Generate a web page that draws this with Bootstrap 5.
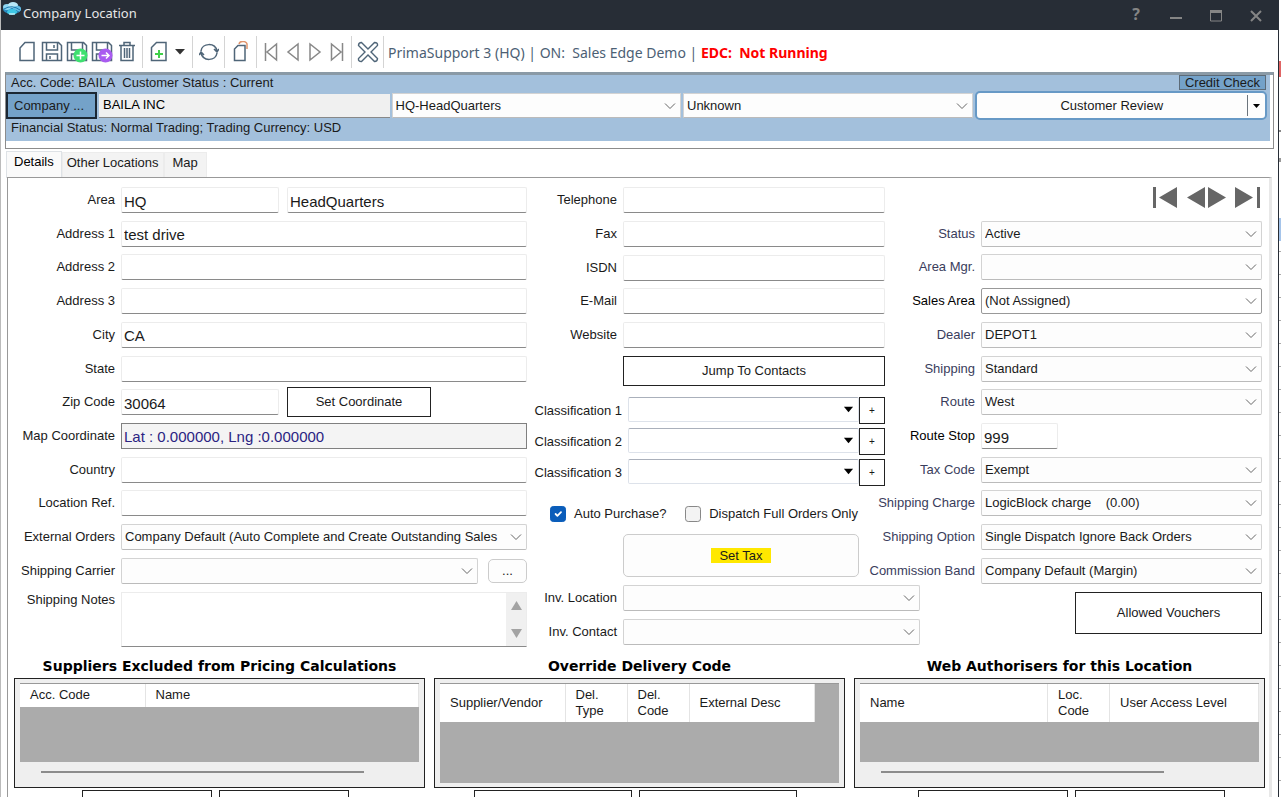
<!DOCTYPE html>
<html lang="en">
<head>
<meta charset="utf-8">
<meta name="viewport" content="width=device-width, initial-scale=1">
<title>Company Location</title>
<link href="https://cdn.jsdelivr.net/npm/bootstrap@5.3.0/dist/css/bootstrap.min.css" rel="stylesheet">
<style>
:root{--field-h:26px;--chev:url("data:image/svg+xml,%3Csvg xmlns='http://www.w3.org/2000/svg' viewBox='0 0 12 12'%3E%3Cpath d='M1 3.5l5 5 5-5' fill='none' stroke='%23666'/%3E%3C/svg%3E")}
body{font:13px/16px "Liberation Sans",Arial,sans-serif;color:#1a1a1a;background:#fff}
button{font:inherit;color:inherit}
.titlebar,.tools,.frame,.tabs{flex:none}
.titlebar{background:#272d36;height:30px;color:#e6e6e6;font:13px/18px "Noto Sans",sans-serif;padding-right:2px}
.titlebar button{width:40px;height:26px;background:none;border:0;color:#858585;padding:0 0 2px}
.win{border-left:1px solid #bbb;border-right:1px solid #272d36;min-width:0}
.strip{width:2px;background:linear-gradient(#fff 61px,#e06464 61px,#e06464 77px,#fff 77px,#fff 130px,#888 130px,#888 132px,#fff 132px,#fff 158px,#999 158px,#999 162px,#fff 162px,#fff 218px,#a5c4ea 218px,#a5c4ea 241px,transparent 241px),repeating-linear-gradient(#fff 0 21px,#aaa 21px 22px,#fff 22px 23px)}
.tools{height:42px;padding-left:13px;padding-top:2px}
.tools button{width:25px;height:28px;padding:0;border:0;background:none;display:flex;align-items:center;justify-content:center}
.tools .step{width:22px}
.tools .drop{width:18px}
.tools .sep{width:1px;height:32px;margin:0 3px;background:#d4d4d4}
.tools svg{fill:none;stroke:#4f6578;stroke-width:1.5}
.status{font:14px/20px "Noto Sans",sans-serif;color:#4c6074;padding:2px 0 0 1px}
.status strong{color:#f00}
.frame{margin:0 4px;border:1px solid #8c8c8c;border-top:3px solid #8a9aa6;height:77px;padding-right:3px}
.band{background:#a3c0dc;height:66px}
.band .line{height:16px;padding-left:5px;line-height:15px}
.band .credit{background:#74a2c9;border:1px solid #5c6b78;width:87px;height:15px;padding:0;line-height:13px;margin-right:4px}
.bandrow{display:grid;grid-template-columns:91px 291fr 290fr 290fr 293fr;column-gap:2px;padding-right:3px;align-items:center}
.company{height:27px;border:2px solid #1b2733;background:#74a2c9;padding:0 6px;text-align:left}
.acct{height:24px;border:0;border-bottom:1px solid #888;background:#f0f0f0;padding:0 4px 1px;min-width:0}
.review{border:2px solid #6799c6;border-radius:5px;background:#fdfdfd;height:29px}
.fld,.sel{height:var(--field-h);min-width:0;border-radius:2px;width:100%}
.fld{border:1px solid #ececec;border-bottom-color:#8a8a8a;background:#fff;font-size:15px;line-height:18px;padding:2px 2px 0;color:#1a1a1a}
.sel{appearance:none;border:1px solid #d3d3d3;border-bottom-color:#bbb;background:#fdfdfd var(--chev) right 4px center/12px 12px no-repeat;padding:0 20px 0 3px;color:#1a1a1a;font-size:13px;text-overflow:ellipsis}
.sel.focus-box{border-color:#999;background-color:#fff}
.band .sel{height:25px;border-radius:0}
.latlng{border:1px solid #808080;border-radius:0;background:#f4f4f4;color:#2b2382;padding-top:0}
.stopno{width:77px}
.pair{display:grid;grid-template-columns:158fr 240fr;column-gap:8px;flex:1;align-items:center}
.coord{width:60%;height:30px;margin:-2px 0}
.tabs{padding-left:5px;height:27px;margin-top:1px;align-items:flex-end}
.tabs .nav-link{border:1px solid #ececec;border-bottom:0;border-radius:0;background:#f3f3f3;color:#1a1a1a;padding:2px 4px 7px;height:26px}
.tabs .nav-link.active{background:#fafafa;padding:2px 7px 8px;height:27px}
.sheet{border:1px solid #999;border-right:3px solid #e8e8e8;border-bottom:0;margin:0 6px;padding-top:9px}
.form3{display:grid;grid-template-columns:519fr 358fr 377fr;padding-right:7px}
.rows{height:397px;display:flex;flex-direction:column;justify-content:space-between}
.rows.upper{height:161px}
.frow{display:flex;align-items:center;gap:6px;min-height:26px}
.frow>label:first-child,.frow>.lab{flex:none;width:90px;display:flex;justify-content:flex-end;white-space:nowrap}
.colL .frow>label:first-child{width:107px}
.colR label{color:#3a3d5c}
.wide{margin-right:-35px}
.clslist{gap:4px;margin:11px 0 20px}
.frow.cls{min-height:27px;align-items:flex-start}
.frow.cls>label:first-child{width:95px;padding-top:6px}
.cls .sel{height:25px;border-color:#aab0bb #dde2ea #dde2ea;background:#fff url("data:image/svg+xml,%3Csvg xmlns='http://www.w3.org/2000/svg' viewBox='0 0 12 12'%3E%3Cpath d='M1 3h10L6 9z'/%3E%3C/svg%3E") right 4px center/11px 11px no-repeat}
.boxbtn{border:1px solid #222;background:#fff;padding:0}
.plus{width:26px;height:27px;flex:none;font-size:10px}
.jump{height:30px}
.vouch{width:187px;height:42px}
.softbtn{border:1px solid #ccc;border-radius:5px;background:#fdfdfd;padding:0}
.dots{width:39px;height:24px}
.settax{height:43px;margin-right:26px}
.hilite{background:#ffe800}
.notes{resize:none;flex:1;border:0;padding:3px;outline:0;min-width:0}
.notebox{display:flex;flex:1;height:55px;border:1px solid #ececec;border-bottom-color:#8a8a8a;overflow:hidden}
.vbar{width:20px;background:#f0f0f0}
.tick{width:16px;height:16px;margin:0;flex:none;border-color:#888;background-color:#f3f3f3}
.tick:checked{background-color:#0a5dba;border-color:#0a5dba;background-size:12px}
.checks{padding:0 27px 0 23px}
.grids{display:grid;grid-template-columns:repeat(3,1fr);gap:9px;padding:11px 4px 0 6px}
.grids h2{font:bold 14px/16px "DejaVu Sans",Verdana,sans-serif;text-align:center;margin:0 0 4px;color:#000}
.gbox{border:1px solid #222;background:#efefef;height:110px;padding:4px 5px 0}
.gview{background:#ababab;height:79px;border-top:1px solid #999}
.gview.tall{height:100px}
.gview table{border-collapse:collapse;background:#fff;table-layout:fixed;width:100%}
.gview table.part{width:94%}
.gview th{font-weight:400;padding:0 10px;border-right:1px solid #e4e4e4;border-bottom:1px solid #ababab;height:38px;vertical-align:middle;text-align:left}
.gview .low th{height:23px}
.c62{width:62px}.c125{width:125px}.c149{width:149px}
.thumb{height:2px;width:81%;background:#8c8c8c;margin:9px auto 0 21px}
.thumb.short{width:71%}
.cuts{display:flex;justify-content:center;gap:7px;margin-top:2px;padding-right:8px}
.cuts.after{padding:0 0 0 24px}
.cut{height:26px;width:130px}
.w158{width:158px}.w150{width:150px}
</style>
</head>
<body class="vh-100 overflow-hidden d-flex">
<div class="win flex-grow-1 d-flex flex-column">
<header class="titlebar d-flex align-items-center">
<svg class="flex-shrink-0 align-self-start" width="22" height="20" viewBox="0 0 22 20" aria-hidden="true"><ellipse cx="11" cy="9" rx="9" ry="5" fill="#2d8fc4"/><ellipse cx="6" cy="7" rx="4" ry="3" fill="#8fd6f2"/><ellipse cx="12" cy="5" rx="5" ry="3" fill="#b7e8f8"/><ellipse cx="16" cy="9" rx="4" ry="3" fill="#67bfe6"/><path d="M3 9q8-5 16 1M5 12q7-4 13 0" stroke="#1c78ac" fill="none"/><ellipse cx="11" cy="12" rx="5" ry="3" fill="#3ec6e4"/><path d="M8 14h6" stroke="#fff"/></svg>
<span class="me-auto mb-1">Company Location</span>
<button type="button" aria-label="Help" class="fs-6 fw-bold">?</button>
<button type="button" aria-label="Minimize"><svg width="14" height="14"><path d="M1 9h12" stroke="#858585" stroke-width="2"/></svg></button>
<button type="button" aria-label="Maximize"><svg width="14" height="14"><path d="M1.500 1v11h11V1" fill="none" stroke="#858585"/><path d="M1 2.500h12" stroke="#858585" stroke-width="3"/></svg></button>
<button type="button" aria-label="Close"><svg width="14" height="14"><path d="M2 2l10 10M12 2L2 12" stroke="#858585" stroke-width="2"/></svg></button>
</header>

<div class="tools d-flex align-items-center" role="toolbar">
<button type="button" aria-label="New"><svg width="20" height="22" viewBox="0 0 20 22"><path d="M8 1.500h9v18H3V7z"/></svg></button>
<button type="button" aria-label="Save"><svg width="22" height="22" viewBox="0 0 22 22"><path d="M1.500 1.500h16l3 3v15h-19zM5.500 2v7h11V2M5.500 19.500V13h11v6.500M13 4v3M9 15v3"/></svg></button>
<button type="button" aria-label="Save and add"><svg width="22" height="22" viewBox="0 0 22 22"><path d="M1.500 1.500h16l3 3v15h-19zM5.500 2v7h11V2M5.500 19.500V13h4"/><circle cx="14.500" cy="14.500" r="7" fill="#3fe070" stroke="none"/><path d="M10.500 14.500h8M14.500 10.500v8" stroke="#fff"/></svg></button>
<button type="button" aria-label="Save and next"><svg width="22" height="22" viewBox="0 0 22 22"><path d="M1.500 1.500h16l3 3v15h-19zM5.500 2v7h11V2M5.500 19.500V13h4"/><circle cx="14.500" cy="14.500" r="7" fill="#a95bf0" stroke="none"/><path d="M10.500 14.500h7M15 11.500l3 3-3 3" stroke="#fff"/></svg></button>
<button type="button" aria-label="Delete"><svg width="20" height="22" viewBox="0 0 20 22"><path d="M2 4.500h16M7 4V1.500h6V4M4 5v14.500h12V5M7.500 7v10M10 7v10M12.500 7v10"/></svg></button>
<span class="sep"></span>
<button type="button" aria-label="Add document"><svg width="20" height="22" viewBox="0 0 20 22"><path d="M7.500 1.500H17v18H2.500V6.500z"/><path d="M10 9v8M6 13h8" stroke="#3fd04a" stroke-width="2"/></svg></button>
<button type="button" class="drop" aria-label="More"><svg width="10" height="6" viewBox="0 0 10 6"><path d="M0 0h10L5 5.500z" fill="#333" stroke="none"/></svg></button>
<span class="sep"></span>
<button type="button" aria-label="Refresh"><svg width="20" height="20" viewBox="0 0 20 20"><path d="M2 9C3 1 16 0 18 9M18 11c-1 8-14 9-16 0M15 7l3 3 2-3M5 13l-3-3-2 3"/></svg></button>
<span class="sep"></span>
<button type="button" aria-label="Paste"><svg width="18" height="22" viewBox="0 0 18 22"><path d="M6 4.500h7v15H2.500V8z"/><path d="M7 3a4 3 0 0 1 8 1v4" stroke="#e0946c"/></svg></button>
<span class="sep"></span>
<button type="button" class="step" aria-label="First"><svg width="14" height="20" viewBox="0 0 14 20"><path stroke="#888" d="M1.500 1v18M12.500 2v16L3 10z"/></svg></button>
<button type="button" class="step" aria-label="Previous"><svg width="14" height="20" viewBox="0 0 14 20"><path stroke="#888" d="M12 2v16L2 10z"/></svg></button>
<button type="button" class="step" aria-label="Next"><svg width="14" height="20" viewBox="0 0 14 20"><path stroke="#888" d="M2 2v16l10-8z"/></svg></button>
<button type="button" class="step" aria-label="Last"><svg width="14" height="20" viewBox="0 0 14 20"><path stroke="#888" d="M12.500 1v18M1.500 2v16l9.500-8z"/></svg></button>
<span class="sep"></span>
<button type="button" aria-label="Cancel"><svg width="22" height="22" viewBox="0 0 22 22"><path stroke-width="1.400" d="M4.500 1.500L11 8l6.500-6.500q3.500 0 3 3L14 11l6.500 6.500q0 3-3 3L11 14l-6.500 6.500q-3.500 0-3-3L8 11 1.500 4.500q0-3 3-3z"/></svg></button>
<span class="sep"></span>
<span class="status">PrimaSupport 3 (HQ) | ON: &nbsp;Sales Edge Demo | <strong>EDC: &nbsp;Not Running</strong></span>
</div>

<section class="frame">
<div class="band">
<div class="line d-flex justify-content-between"><span>Acc. Code: BAILA&nbsp; Customer Status : Current</span><button type="button" class="credit">Credit Check</button></div>
<div class="bandrow">
<button type="button" class="company">Company ...</button>
<input class="acct" aria-label="Company" value="BAILA INC" readonly>
<select class="sel" aria-label="Location"><option>HQ-HeadQuarters</option></select>
<select class="sel" aria-label="Type"><option>Unknown</option></select>
<button type="button" class="review d-flex align-items-center p-0"><span class="flex-grow-1">Customer Review</span><span class="border-start border-secondary px-1 lh-1 py-1"><svg width="9" height="5"><path d="M1 0h7L4.500 4z"/></svg></span></button>
</div>
<div class="line">Financial Status: Normal Trading; Trading Currency: USD</div>
</div>
</section>

<ul class="nav nav-tabs tabs border-0 flex-nowrap">
<li class="nav-item"><a class="nav-link active" href="#">Details</a></li>
<li class="nav-item"><a class="nav-link" href="#">Other Locations</a></li>
<li class="nav-item"><a class="nav-link px-2" href="#">Map</a></li>
</ul>

<main class="sheet flex-grow-1">
<form class="form3">
<div class="colL">
<div class="rows">
<div class="frow"><label for="area">Area</label><div class="pair"><input id="area" class="fld" value="HQ"><input class="fld" aria-label="Area name" value="HeadQuarters"></div></div>
<div class="frow"><label for="a1">Address 1</label><input id="a1" class="fld" value="test drive"></div>
<div class="frow"><label for="a2">Address 2</label><input id="a2" class="fld"></div>
<div class="frow"><label for="a3">Address 3</label><input id="a3" class="fld"></div>
<div class="frow"><label for="city">City</label><input id="city" class="fld" value="CA"></div>
<div class="frow"><label for="state">State</label><input id="state" class="fld"></div>
<div class="frow"><label for="zip">Zip Code</label><div class="pair"><input id="zip" class="fld" value="30064"><button type="button" class="boxbtn coord">Set Coordinate</button></div></div>
<div class="frow"><label for="map">Map Coordinate</label><input id="map" class="fld latlng" value="Lat : 0.000000, Lng :0.000000" readonly></div>
<div class="frow"><label for="country">Country</label><input id="country" class="fld"></div>
<div class="frow"><label for="ref">Location Ref.</label><input id="ref" class="fld"></div>
<div class="frow"><label for="ext">External Orders</label><select id="ext" class="sel"><option>Company Default (Auto Complete and Create Outstanding Sales</option></select></div>
<div class="frow"><label for="carrier">Shipping Carrier</label><select id="carrier" class="sel me-1"><option></option></select><button type="button" class="softbtn dots flex-shrink-0">...</button></div>
</div>
<div class="frow align-items-start mt-2"><label for="notes">Shipping Notes</label><div class="notebox"><textarea id="notes" class="notes"></textarea><div class="vbar d-flex flex-column align-items-center justify-content-between py-2"><svg width="11" height="9"><path d="M5.500 0L11 9H0z" fill="#a3a3a3"/></svg><svg width="11" height="9"><path d="M0 0h11L5.500 9z" fill="#a3a3a3"/></svg></div></div></div>
</div>

<div>
<div class="rows upper">
<div class="frow"><label for="tel">Telephone</label><input id="tel" class="fld"></div>
<div class="frow"><label for="fax">Fax</label><input id="fax" class="fld"></div>
<div class="frow"><label for="isdn">ISDN</label><input id="isdn" class="fld"></div>
<div class="frow"><label for="mail">E-Mail</label><input id="mail" class="fld"></div>
<div class="frow"><label for="web">Website</label><input id="web" class="fld"></div>
</div>
<div class="frow mt-2"><span class="lab"></span><button type="button" class="boxbtn jump w-100">Jump To Contacts</button></div>
<div class="clslist d-flex flex-column">
<div class="frow cls"><label for="c1">Classification 1</label><div class="d-flex flex-grow-1"><select id="c1" class="sel"><option></option></select><button type="button" class="boxbtn plus">+</button></div></div>
<div class="frow cls"><label for="c2">Classification 2</label><div class="d-flex flex-grow-1"><select id="c2" class="sel"><option></option></select><button type="button" class="boxbtn plus">+</button></div></div>
<div class="frow cls"><label for="c3">Classification 3</label><div class="d-flex flex-grow-1"><select id="c3" class="sel"><option></option></select><button type="button" class="boxbtn plus">+</button></div></div>
</div>
<div class="checks d-flex align-items-center justify-content-between text-nowrap">
<div class="d-flex align-items-center gap-2"><input id="auto" type="checkbox" class="form-check-input tick" checked><label for="auto">Auto Purchase?</label></div>
<div class="d-flex align-items-center gap-2"><input id="full" type="checkbox" class="form-check-input tick"><label for="full">Dispatch Full Orders Only</label></div>
</div>
<div class="frow mt-2 pt-1"><span class="lab"></span><button type="button" class="softbtn settax flex-grow-1"><span class="hilite px-2">Set Tax</span></button></div>
<div class="frow wide mt-2"><label for="il">Inv. Location</label><select id="il" class="sel"><option></option></select></div>
<div class="frow wide mt-2"><label for="ic">Inv. Contact</label><select id="ic" class="sel"><option></option></select></div>
</div>

<div class="colR">
<div class="rows">
<div class="frow justify-content-end align-items-start"><svg width="110" height="22" viewBox="0 0 110 22" fill="#666" class="mt-n1"><path d="M1 0h3v21H1zM25 0v21L7 10.500zM53 0v21L35 10.500zM56 0v21l18-10.500zM83 0v21l18-10.500zM105 0h3v21h-3z"/></svg></div>
<div class="frow"><label for="st">Status</label><select id="st" class="sel"><option>Active</option></select></div>
<div class="frow"><label for="am">Area Mgr.</label><select id="am" class="sel"><option></option></select></div>
<div class="frow"><label for="sa" class="text-black">Sales Area</label><select id="sa" class="sel focus-box"><option>(Not Assigned)</option></select></div>
<div class="frow"><label for="de">Dealer</label><select id="de" class="sel"><option>DEPOT1</option></select></div>
<div class="frow"><label for="sh">Shipping</label><select id="sh" class="sel"><option>Standard</option></select></div>
<div class="frow"><label for="ro">Route</label><select id="ro" class="sel"><option>West</option></select></div>
<div class="frow"><label for="rs" class="text-black">Route Stop</label><input id="rs" class="fld stopno" value="999"></div>
<div class="frow"><label for="tc">Tax Code</label><select id="tc" class="sel"><option>Exempt</option></select></div>
<div class="frow"><label for="sc">Shipping Charge</label><select id="sc" class="sel"><option>LogicBlock charge&nbsp;&nbsp;&nbsp; (0.00)</option></select></div>
<div class="frow"><label for="so">Shipping Option</label><select id="so" class="sel"><option>Single Dispatch Ignore Back Orders</option></select></div>
<div class="frow"><label for="cb">Commission Band</label><select id="cb" class="sel"><option>Company Default (Margin)</option></select></div>
</div>
<div class="d-flex justify-content-end mt-2"><button type="button" class="boxbtn vouch">Allowed Vouchers</button></div>
</div>
</form>

<div class="grids">
<section><h2>Suppliers Excluded from Pricing Calculations</h2>
<div class="gbox"><div class="gview"><table class="low"><colgroup><col class="c125"><col></colgroup><thead><tr><th>Acc. Code</th><th>Name</th></tr></thead></table></div><div class="thumb"></div></div>
<div class="cuts"><button type="button" class="boxbtn cut" aria-label="Add supplier"></button><button type="button" class="boxbtn cut" aria-label="Remove supplier"></button></div></section>
<section><h2>Override Delivery Code</h2>
<div class="gbox"><div class="gview tall"><table class="part"><colgroup><col class="c125"><col class="c62"><col class="c62"><col></colgroup><thead><tr><th>Supplier/Vendor</th><th>Del. Type</th><th>Del. Code</th><th>External Desc</th></tr></thead></table></div></div>
<div class="cuts"><button type="button" class="boxbtn cut w158" aria-label="Add code"></button><button type="button" class="boxbtn cut w158" aria-label="Remove code"></button></div></section>
<section><h2>Web Authorisers for this Location</h2>
<div class="gbox"><div class="gview"><table><colgroup><col><col class="c62"><col class="c149"></colgroup><thead><tr><th>Name</th><th>Loc. Code</th><th>User Access Level</th></tr></thead></table></div><div class="thumb short"></div></div>
<div class="cuts after"><button type="button" class="boxbtn cut w150" aria-label="Add authoriser"></button><button type="button" class="boxbtn cut w150" aria-label="Remove authoriser"></button></div></section>
</div>
</main>
</div>
<div class="strip flex-shrink-0"></div>
<script src="https://cdn.jsdelivr.net/npm/bootstrap@5.3.0/dist/js/bootstrap.bundle.min.js"></script>
</body>
</html>
